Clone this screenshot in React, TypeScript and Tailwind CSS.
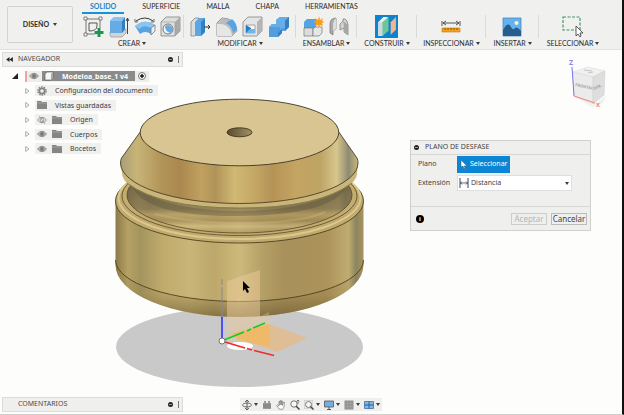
import React from "react";

type IconProps = { children: React.ReactNode; label: string; active?: boolean };

function Tool({ children, label, active }: IconProps) {
  return (
    <button type="button" aria-label={label} className={active ? "size-[23px] bg-[#0b84d0]" : "size-[22px]"}>
      <svg viewBox="0 0 22 22" className="size-full">{children}</svg>
    </button>
  );
}

function Caret() {
  return <span aria-hidden="true" className="border-x-2 border-t-3 border-x-transparent border-t-[#3c3c3c]" />;
}

type GroupProps = { name: string; width: string; last?: boolean; children: React.ReactNode };

function Group({ name, width, last, children }: GroupProps) {
  return (
    <section aria-label={name} className={`flex flex-none flex-col items-center ${width}`}>
      <div className={`flex h-[23px] w-full items-center justify-center gap-1 ${last ? "" : "border-r border-[#dadada]"}`}>{children}</div>
      <button type="button" className="flex h-[11px] items-center gap-[2px] whitespace-nowrap text-[7px] leading-[11px]">
        {name}
        <Caret />
      </button>
    </section>
  );
}

function Toolbar() {
  return (
    <header className="flex h-[50px] flex-none overflow-hidden border-b border-[#e2e2e1] bg-[#f0f0ef] font-['Lato','Noto_Sans',sans-serif] text-[#2c2c2c]">
      <button
        type="button"
        className="mt-[6px] ml-[7px] flex h-[37px] w-[66px] flex-none items-center justify-center gap-1 rounded-xs border border-[#d2d2d2] text-[7px] font-bold"
      >
        DISEÑO <Caret />
      </button>
      <div className="ml-[7px] flex flex-none flex-col">
        <nav className="flex h-[15px] gap-[26px] pl-[2px] text-[7px] leading-[13px]">
          <a href="#solido" className="-mr-2 h-[14px] border-b-2 border-[#1a90d6] px-2 font-bold text-[#1a86c8]">SOLIDO</a>
          <a href="#superficie">SUPERFICIE</a>
          <a href="#malla">MALLA</a>
          <a href="#chapa">CHAPA</a>
          <a href="#herramientas">HERRAMIENTAS</a>
        </nav>
        <div className="flex">
          <Group name="CREAR" width="w-[104px]">
            <Tool label="Crear boceto">
              <path d="M4 3h14v15H4z" fill="none" stroke="#444" strokeWidth=".7" />
              <path d="M7 7h8v3q0 5-8 5z" fill="none" stroke="#444" strokeWidth=".9" />
              <path d="M2 1h3v3H2zM17 1h3v3h-3zM2 17h3v3H2z" fill="#fafafa" stroke="#555" strokeWidth=".7" />
              <path d="M17 12v9M12.500 16.500h9" stroke="#fff" strokeWidth="4" />
              <path d="M17 12v9M12.500 16.500h9" stroke="#239152" strokeWidth="3" />
            </Tool>
            <Tool label="Extruir">
              <path d="M2 19v-3h12l4-3v4l-4 4H3z" fill="#d4d4d4" stroke="#888" strokeWidth=".6" />
              <path d="M2 5l4-4h11l-3 4v12H2z" fill="#65abe6" />
              <path d="M14 5l3-4v12l-3 4z" fill="#317fc2" />
              <path d="M2 5l4-4h11l-3 4z" fill="#87c2f0" />
              <path d="M19.500 18V3M18 5l1.500-3L21 5" stroke="#333" fill="none" strokeWidth=".9" />
            </Tool>
            <Tool label="Revolución">
              <path d="M2 5Q11-1 19 5" stroke="#333" fill="none" />
              <path d="M1 3v3h3M20 3v3h-3" stroke="#333" fill="none" strokeWidth=".7" />
              <path d="M1 10Q11 2 21 9l-4 9Q11 14 6 18z" fill="#58a4e3" />
              <path d="M1 10Q11 2 21 9l-4 3Q10 8 5 13z" fill="#8bc4f0" />
              <path d="M17 12l4-3v6l-4 4z" fill="#eee" stroke="#777" strokeWidth=".8" />
            </Tool>
            <Tool label="Agujero">
              <path d="M1 6l5-5h14v14l-5 5H1z" fill="#dedede" stroke="#777" strokeWidth=".7" />
              <path d="M15 6l5-5v14l-5 5z" fill="#aaa" />
              <path d="M1 6h14v14" fill="none" stroke="#999" strokeWidth=".6" />
              <circle cx="8" cy="13" r="5" fill="#f8f8f8" stroke="#777" />
              <path d="M5 10q0 6 6 7 3-4 0-7-3-2-6 0z" fill="#65abe6" />
            </Tool>
          </Group>
          <Group name="MODIFICAR" width="w-[112px]">
            <Tool label="Pulsar/tirar">
              <path d="M1 6l4-4h4v14l-4 4H1z" fill="#ddd" stroke="#777" strokeWidth=".7" />
              <path d="M5 6l4-4h6v14l-4 4H5z" fill="#5aa7e6" />
              <path d="M11 6l4-4v14l-4 4z" fill="#3380c3" />
              <path d="M14 11h6M18 9l2 2-2 2" fill="none" stroke="#333" />
            </Tool>
            <Tool label="Empalme">
              <path d="M1 20V7l5-5q13 0 15 13l-5 5z" fill="#ddd" stroke="#777" strokeWidth=".8" />
              <path d="M1 8q13-1 15 12l5-5Q18 3 7 2z" fill="#bbb" />
              <path d="M1 8q13-1 15 12H1z" fill="#e6e6e6" />
              <path d="M10 7l6-4q5 4 5 11l-4 3q-1-7-7-10z" fill="#58a4e3" />
            </Tool>
            <Tool label="Vaciado">
              <path d="M1 6l5-5h14v14l-5 5H1z" fill="#e5e5e5" stroke="#777" strokeWidth=".7" />
              <path d="M15 6l5-5v14l-5 5z" fill="#b5b5b5" />
              <path d="M4 9h9v8H4z" fill="#f8f8f8" stroke="#888" strokeWidth=".7" />
              <path d="M4 9l5 3v5H4z" fill="#267dc3" />
              <path d="M4 17l4-4h5v4z" fill="#70b5ec" />
            </Tool>
            <Tool label="Combinar">
              <path d="M1 11l3-3h4V4l4-3h9v10l-4 4h-3v2l-4 4H1z" fill="#529ddd" />
              <path d="M1 11l3-3h4V4l4-3h9l-4 4v7h-3l-2 2v-3z" fill="#69ade6" />
              <path d="M17 5l4-4v10l-4 4zM10 17l4-4v4l-4 4z" fill="#357fbf" />
            </Tool>
          </Group>
          <Group name="ENSAMBLAR" width="w-[61px]">
            <Tool label="Nuevo componente">
              <path d="M2 6l3-3h9v8l-3 2H2z" fill="#55a3e2" />
              <path d="M2 12h9v8H2z" fill="#ddd" stroke="#777" strokeWidth=".7" />
              <path d="M11 13l2-2h7v6l-3 3h-6z" fill="#e6e6e6" stroke="#777" strokeWidth=".7" />
              <path d="M17 0l1 4 3-2-1 3 3 1-3 1 1 3-3-1-1 3-1-3-3 1 1-3-3-1 3-1-1-3 3 2z" fill="#f7a017" />
            </Tool>
            <Tool label="Unión">
              <path d="M2 8q0-6 6-6v11l-3 2v4l-3-2z" fill="#aaa" stroke="#777" strokeWidth=".7" />
              <path d="M5 8q0-3 3-6v11l-3 2z" fill="#ddd" />
              <path d="M12 8l3-3V3q4-1 5 6v10l-4-3v-4l-4 2z" fill="#d2d2d2" stroke="#777" strokeWidth=".7" />
              <path d="M15 5l5 4v10l-4-3v-6z" fill="#a7a7a7" />
            </Tool>
          </Group>
          <Group name="CONSTRUIR" width="w-[60px]">
            <Tool label="Plano de desfase" active>
              <path d="M3 7l5-5h4v13l-5 5H3z" fill="#eee" />
              <path d="M3 7h4v13H3z" fill="#cfd8de" />
              <path d="M7 7l6-5v13l-6 5z" fill="#6cc59d" />
              <path d="M15 7l5-5v12l-5 5z" fill="#f1b58f" />
            </Tool>
          </Group>
          <Group name="INSPECCIONAR" width="w-[69px]">
            <Tool label="Medir">
              <path d="M2 5v5M20 5v5M3 7h16M6 5L3 7l3 2M16 5l3 2-3 2" fill="none" stroke="#444" strokeWidth=".9" />
              <path d="M2 12h18v4H2z" fill="#f3a01f" stroke="#c67b0d" strokeWidth=".6" />
              <path d="M5 12v2M8 12v2M11 12v2M14 12v2M17 12v2" stroke="#704609" strokeWidth=".8" />
            </Tool>
          </Group>
          <Group name="INSERTAR" width="w-[53px]">
            <Tool label="Insertar imagen">
              <path d="M2 2h18v18H2z" fill="#64b3f0" stroke="#438bc4" strokeWidth=".8" />
              <path d="M2 14q5-9 8-3 2 4 4 1 2-2 6 3v5H2z" fill="#285c8c" />
              <circle cx="15.500" cy="7" r="2" fill="#fff5c7" />
            </Tool>
          </Group>
          <Group name="SELECCIONAR" width="w-[68px]" last>
            <Tool label="Seleccionar objetos">
              <path d="M1 1h17v13H1z" fill="none" stroke="#45936c" strokeWidth="1.200" strokeDasharray="3 1.500" />
              <path d="M14 10v10l2-2 2 3 1-1-1-3h3z" fill="#fff" stroke="#333" strokeWidth=".8" />
            </Tool>
          </Group>
        </div>
      </div>
    </header>
  );
}

function Model() {
  return (
    <svg viewBox="0 50 622 364" preserveAspectRatio="xMinYMin meet" className="absolute inset-0 size-full" role="img" aria-label="Modelo 3D">
      <defs>
        <linearGradient id="cone">
          <stop offset="0" stopColor="#a89f77" /><stop offset=".07" stopColor="#c8b477" /><stop offset=".17" stopColor="#b29559" />
          <stop offset=".25" stopColor="#ab874e" /><stop offset=".34" stopColor="#c0a160" /><stop offset=".4" stopColor="#b19359" />
          <stop offset=".48" stopColor="#d0b974" /><stop offset=".56" stopColor="#c5a866" /><stop offset=".64" stopColor="#b59357" />
          <stop offset=".74" stopColor="#c4a562" /><stop offset=".84" stopColor="#bda365" /><stop offset=".91" stopColor="#d7c68c" />
          <stop offset=".96" stopColor="#8d8c72" /><stop offset="1" stopColor="#c9b77f" />
        </linearGradient>
        <linearGradient id="body">
          <stop offset="0" stopColor="#8b7a4a" /><stop offset=".05" stopColor="#b5a164" /><stop offset=".1" stopColor="#a3945f" />
          <stop offset=".19" stopColor="#c0ab6c" /><stop offset=".3" stopColor="#c8b577" /><stop offset=".4" stopColor="#bda76a" />
          <stop offset=".5" stopColor="#cdba7b" /><stop offset=".59" stopColor="#b5a066" /><stop offset=".68" stopColor="#a8915a" />
          <stop offset=".85" stopColor="#ab935a" /><stop offset=".94" stopColor="#c0ac70" /><stop offset=".97" stopColor="#8c845f" /><stop offset="1" stopColor="#a89460" />
        </linearGradient>
        <linearGradient id="foot" x1="0" y1="0" x2="0" y2="1">
          <stop offset="0" stopColor="#5c4d28" stopOpacity="0" /><stop offset=".6" stopColor="#75602f" stopOpacity=".15" /><stop offset="1" stopColor="#5e4e2b" stopOpacity=".6" />
        </linearGradient>
        <linearGradient id="groove" x1="0" y1="0" x2="0" y2="1">
          <stop offset=".4" stopColor="#6b6143" stopOpacity=".75" /><stop offset=".68" stopColor="#7d704d" stopOpacity=".7" />
          <stop offset=".76" stopColor="#b39b62" stopOpacity=".6" /><stop offset=".84" stopColor="#9c8350" stopOpacity=".6" />
          <stop offset=".91" stopColor="#d3bf86" stopOpacity=".6" /><stop offset="1" stopColor="#a08a53" stopOpacity=".5" />
        </linearGradient>
        <linearGradient id="hole"><stop offset="0" stopColor="#574b31" /><stop offset="1" stopColor="#a49162" /></linearGradient>
      </defs>
      <ellipse cx="239.500" cy="347" rx="123.500" ry="40" fill="#c9c9c9" />

      <path d="M115.500 201V265A124 52 0 0 0 363.500 265V201z" fill="url(#body)" />
      <path d="M115.500 260A124 41.500 0 0 0 363.500 260V265A124 52 0 0 1 115.500 265z" fill="url(#foot)" />
      <path d="M115.500 260A124 41.500 0 0 0 363.500 260" fill="none" stroke="#4d4020" strokeWidth=".9" />

      <ellipse cx="239.500" cy="201" rx="124" ry="42" fill="#c0aa6d" stroke="#4d4020" strokeWidth=".9" />
      <ellipse cx="239.500" cy="198" rx="121" ry="41" fill="none" stroke="#dcc88e" strokeWidth="2" />
      <ellipse cx="239.500" cy="196" rx="117.500" ry="39.500" fill="#c2ac70" stroke="#584927" strokeWidth=".8" />
      <ellipse cx="239.500" cy="195" rx="112.500" ry="38" fill="url(#body)" />
      <ellipse cx="239.500" cy="195" rx="112.500" ry="38" fill="url(#groove)" stroke="#584927" strokeWidth=".8" />
      <path d="M155 214Q195 224 250 223T325 212" fill="none" stroke="#cdbb83" strokeWidth="2" opacity=".35" />
      <path d="M133 188Q172 211 239 211T346 188Q330 215 239 216T133 188z" fill="#5a533c" opacity=".4" />

      <path d="M120.500 163L122 173Q122 178 127 183Q160 208 239.500 208T352 183Q357 178 357 173L358 163z" fill="#c9b67b" />
      <path d="M127 183Q160 208 239.500 208T352 183" fill="none" stroke="#8d7a4c" strokeWidth="1" />
      <path d="M140.200 132L121.500 158Q120.500 160 120.500 163A118.750 40.500 0 0 0 358 163Q358 160 357 158L338.800 132z" fill="url(#cone)" stroke="#4d4020" strokeWidth=".9" />
      <ellipse cx="239.500" cy="132.500" rx="99.300" ry="33.300" fill="#d8c592" stroke="#393526" strokeWidth=".9" />
      <ellipse cx="239.500" cy="132.300" rx="12.500" ry="4.500" fill="url(#hole)" stroke="#40371f" strokeWidth=".9" />

      <path d="M227 281l33-11v48l-33 14z" fill="#ecc99c" opacity=".5" />
      <path d="M227 332l42-20v36l-42-9z" fill="#f6c981" opacity=".3" />
      <path d="M229 334l40-10 38 14-30 14z" fill="#efb775" opacity=".6" />
      <path d="M234 333l35-9v23l-32-7z" fill="#f3b64e" opacity=".6" />
      <ellipse cx="240" cy="346" rx="13" ry="4" fill="#fff" />
      <path d="M222 279v6M222 287v31" stroke="#858699" strokeWidth="1" />
      <path d="M222 317v22" stroke="#2727ff" strokeWidth="1.500" />
      <path d="M224 340l20-8M247 331l4-2M253 328l12-5" stroke="#15cb22" strokeWidth="1.600" />
      <path d="M225 342l20 6M247 348.500l5 1.500M254 350.500l20 5" stroke="#f52a20" strokeWidth="1.500" />
      <circle cx="222" cy="341" r="3" fill="#fff" stroke="#777" />
      <path d="M243 281v10l2-2 2 4 2-1-2-4h3z" fill="#000" />
    </svg>
  );
}

function PanelBar({ title, arrows }: { title: string; arrows?: boolean }) {
  return (
    <div className="flex h-[15px] w-[181px] flex-none items-center border border-[#dcdcdb] bg-[#efefee] px-[3px] text-[7px] text-[#4c4c4c]">
      <span className="flex w-3">
        {arrows && <svg viewBox="0 0 8 6" className="h-[5px] w-[7px]"><path d="M0 3l4-3v6zM4 3l4-3v6z" fill="#222" /></svg>}
      </span>
      <h2 className="flex-1">{title}</h2>
      <button type="button" aria-label={`Contraer ${title}`} className="flex size-[5px] items-center justify-center rounded-full bg-[#222]">
        <span className="h-px w-[3px] bg-[#999]" />
      </button>
      <span className="ml-[5px] h-[7px] w-px bg-[#777]" />
    </div>
  );
}

function Eye({ off }: { off?: boolean }) {
  return (
    <svg viewBox="0 0 10 8" className="h-[8px] w-[10px] flex-none">
      <path d="M0.500 4Q5-1.500 9.500 4 5 9.500.5 4z" fill={off ? "none" : "#bbb"} stroke="#888" strokeWidth=".9" />
      <circle cx="5" cy="4" r="1.900" fill={off ? "none" : "#777"} stroke="#888" strokeWidth=".8" />
      {off && <path d="M2 0l6 8" stroke="#999" strokeWidth=".8" />}
    </svg>
  );
}

function Folder() {
  return (
    <svg viewBox="0 0 10 8" className="h-[8px] w-[10px] flex-none">
      <path d="M0 0h4l1 1h5v7H0z" fill="#858585" /><path d="M0 2h10" stroke="#b5b5b5" strokeWidth=".6" />
    </svg>
  );
}

function Gear() {
  return (
    <svg viewBox="0 0 10 10" className="size-[10px] flex-none">
      <circle cx="5" cy="5" r="4" fill="none" stroke="#858585" strokeWidth="1.600" strokeDasharray="1.500 1" />
      <circle cx="5" cy="5" r="2.600" fill="none" stroke="#858585" strokeWidth="1.600" />
    </svg>
  );
}

function Expand() {
  return (
    <button type="button" aria-label="Expandir" className="w-[10px] flex-none">
      <svg viewBox="0 0 5 6" className="h-[6px] w-[5px]"><path d="M.7.500L4 3 .7 5.500z" fill="#fff" stroke="#888" strokeWidth=".7" /></svg>
    </button>
  );
}

const rows = [
  { name: "Configuración del documento", gear: true },
  { name: "Vistas guardadas" },
  { name: "Origen", eye: "off" },
  { name: "Cuerpos", eye: "on" },
  { name: "Bocetos", eye: "on" },
];

function Browser() {
  return (
    <aside aria-label="Navegador" className="relative pt-[2px] pl-[2px]">
      <PanelBar title="NAVEGADOR" arrows />
      <ul className="mt-[2px] grid h-[87px] w-[181px] grid-rows-6 text-[7px] leading-[11px]">
        <li className="flex items-center pl-[10px]">
          <svg viewBox="0 0 6 6" className="mr-[7px] size-[6px]"><path d="M6 0v6H0z" fill="#222" /></svg>
          <span className="h-[11px] w-[2px] bg-[#f1a3a0]" />
          <span className="flex h-[11px] items-center bg-[#ededec] pr-[3px] pl-[2px]">
            <Eye />
            <span className="ml-[3px] flex h-[10px] items-center bg-[#8b8b8b] pr-[7px] pl-[2px] font-bold text-white">
              <svg viewBox="0 0 10 10" className="mr-[8px] size-[10px]"><path d="M1 3l2-2h6v6L7 9H1z" fill="#f5f5f5" stroke="#555" strokeWidth=".6" /><path d="M7 3l2-2v6L7 9z" fill="#aaa" /></svg>
              Modeloa_base_1 v4
            </span>
            <input type="radio" aria-label="Activar componente" defaultChecked className="ml-[3px] size-[8px] appearance-none rounded-full border border-[#777] bg-[radial-gradient(#222_35%,#fff_45%)]" />
          </span>
        </li>
        {rows.map((row) => (
          <li key={row.name} className="flex items-center pl-[23px]">
            <Expand />
            <span className="flex h-[11px] items-center gap-[5px] bg-[#f0f0ef] pr-[5px] pl-[2px]">
              {row.eye && <Eye off={row.eye === "off"} />}
              {row.gear ? <Gear /> : <Folder />}
              <span className="pl-[3px] whitespace-nowrap">{row.name}</span>
            </span>
          </li>
        ))}
      </ul>
    </aside>
  );
}

function ViewCube() {
  return (
    <svg viewBox="0 0 46 56" className="absolute top-[6px] right-[10px] h-[56px] w-[46px]" role="img" aria-label="Cubo de vista">
      <path d="M7 40l20 9 13-9-3 7-11 4z" fill="#ddd" opacity=".4" />
      <path d="M7 16l15-5 17 4-12 6z" fill="#f0f0f0" stroke="#ddd" strokeWidth=".6" />
      <path d="M7 16l20 5v27L8 40z" fill="#ebebeb" stroke="#d8d8d8" strokeWidth=".6" />
      <path d="M27 21l12-6-1 24-11 9z" fill="#dedede" stroke="#d0d0d0" strokeWidth=".6" />
      <text x="9" y="30" fontSize="4" fontWeight="700" fill="#a3a3a3" transform="rotate(12 9 30)">FRONTAL</text>
      <text x="28" y="34" fontSize="4" fontWeight="700" fill="#a3a3a3" transform="rotate(-24 28 34)">DER.</text>
      <path d="M18 14l8 1M22 17l5-1" stroke="#c4c4c4" />
      <path d="M6 11l2 29" stroke="#7777e8" strokeWidth="1" />
      <path d="M8 40l21 7" stroke="#ee8c80" strokeWidth="1.200" />
      <text x="3" y="9" fontSize="7" fontWeight="700" fill="#8989ef">Z</text>
      <text x="30" y="51" fontSize="6" fontWeight="700" fill="#f0857e">X</text>
    </svg>
  );
}

function OffsetDialog() {
  return (
    <form aria-label="Plano de desfase" onSubmit={(e) => e.preventDefault()} className="absolute top-[90px] right-[31px] w-[181px] border border-[#d0d0cf] bg-[#efefee] text-[7px] text-[#444]">
      <div className="flex h-[14px] items-center border-b border-[#d6d6d5] pl-[3px]">
        <span className="mr-[6px] flex size-[5px] items-center justify-center rounded-full bg-[#222]"><span className="h-px w-[3px] bg-[#999]" /></span>
        <h2>PLANO DE DESFASE</h2>
      </div>
      <div className="grid grid-cols-[39px_115px] gap-y-[2px] pt-px pl-[7px]">
        <label htmlFor="plane" className="self-center">Plano</label>
        <button id="plane" type="button" className="flex h-[17px] w-[53px] items-center gap-[3px] bg-[#0c86d4] pl-[3px] text-white">
          <svg viewBox="0 0 7 9" className="h-[9px] w-[7px]"><path d="M1 0v7l2-1 1 3 1-1-1-2h3z" fill="#fff" stroke="#34536c" strokeWidth=".5" /></svg>
          Seleccionar
        </button>
        <label htmlFor="extent" className="self-center">Extensión</label>
        <span className="grid items-center">
          <select id="extent" className="col-start-1 row-start-1 h-[16px] appearance-none border border-[#dededd] bg-white pl-[13px]"><option>Distancia</option></select>
          <svg viewBox="0 0 10 10" className="pointer-events-none col-start-1 row-start-1 ml-[2px] size-[10px]"><path d="M1 0v10M9 0v10" stroke="#34406d" /><path d="M1 5h8M3 3.500L1.500 5 3 6.500M7 3.500L8.500 5 7 6.500" stroke="#333" strokeWidth=".7" fill="none" /></svg>
          <span className="pointer-events-none col-start-1 row-start-1 mr-[3px] flex justify-self-end"><Caret /></span>
        </span>
      </div>
      <div className="mt-[15px] flex h-[24px] items-center gap-1 border-t border-[#d6d6d5] pr-[3px] pl-[5px]">
        <span className="flex size-[8px] items-center justify-center rounded-full bg-black text-[6px] leading-[8px] font-bold text-white">i</span>
        <button type="button" disabled className="ml-auto h-[12px] w-[36px] border border-[#ccc] text-[8px] leading-[10px] text-[#b5b5b5]">Aceptar</button>
        <button type="submit" className="h-[12px] w-[36px] border border-[#bbb] text-[8px] leading-[10px]">Cancelar</button>
      </div>
    </form>
  );
}

function NavButton({ label, caret, children }: { label: string; caret?: boolean; children: React.ReactNode }) {
  return (
    <button type="button" aria-label={label} className="flex items-center gap-[2px]">
      <svg viewBox="0 0 10 10" className="size-[10px]">{children}</svg>
      {caret && <Caret />}
    </button>
  );
}

function ViewControls() {
  return (
    <div role="toolbar" aria-label="Navegación" className="flex h-[13px] w-[142px] items-center justify-between bg-[#efefee] px-[2px]">
      <NavButton label="Órbita" caret>
        <ellipse cx="5" cy="5" rx="4.500" ry="2" fill="none" stroke="#666" strokeWidth=".9" /><path d="M5 0v10M3 2l2-2 2 2M3 8l2 2 2-2" fill="none" stroke="#555" strokeWidth=".9" />
      </NavButton>
      <NavButton label="Mirar a"><path d="M1 3h8v6H1zM2 1h2v2H2zM6 1h2v2H6z" fill="#9a9a9a" /><path d="M1 5h8M1 7h8" stroke="#666" strokeWidth=".6" /></NavButton>
      <NavButton label="Encuadre"><path d="M3 9L.7 5.500l1-.5L3 6V1.500h1V5 .7h1.200V5 1h1.200v4.500L7.500 2l1 .3L8 7 6.500 9.500z" fill="#fff" stroke="#777" strokeWidth=".7" /></NavButton>
      <NavButton label="Zoom"><circle cx="4" cy="4" r="3.200" fill="#f7f7f7" stroke="#777" /><path d="M6 6l3.500 3.500" stroke="#444" strokeWidth="1.500" /><path d="M8 0v4M6.500 1.500L8 0l1.500 1.500" stroke="#555" strokeWidth=".7" fill="none" /></NavButton>
      <NavButton label="Ajustar" caret><path d="M.5.500h8v8h-8z" fill="none" stroke="#999" strokeWidth=".6" strokeDasharray="1 1" /><circle cx="4.500" cy="4.500" r="3" fill="#f7f7f7" stroke="#777" /><path d="M6.500 6.500l3 3" stroke="#444" strokeWidth="1.500" /></NavButton>
      <NavButton label="Visualización" caret><path d="M.5 1h9v6h-9z" fill="#75aee0" stroke="#555" strokeWidth=".8" /><path d="M3 9.500h4M5 7v2" stroke="#555" /></NavButton>
      <NavButton label="Rejilla" caret><path d="M.5.500h9v9h-9z" fill="#929292" /><path d="M.5 3.500h9M.5 6.500h9M3.500.500v9M6.500.500v9" stroke="#aaa" strokeWidth=".5" /></NavButton>
      <NavButton label="Ventanas" caret><path d="M.5 1.500h9v7h-9z" fill="#82b6e5" stroke="#426f9c" strokeWidth=".8" /><path d="M5 1.500v7M.5 5h9" stroke="#345f8c" /></NavButton>
    </div>
  );
}

export default function App() {
  return (
    <div className="flex min-h-screen flex-col overflow-hidden border-r-2 border-b border-r-[#111] border-b-[#cfcfcf] bg-[#fdfdfb] font-['Noto_Sans','Open_Sans',sans-serif] text-[#3c3c3c]">
      <Toolbar />
      <main className="relative flex flex-1 flex-col justify-between">
        <Model />
        <Browser />
        <ViewCube />
        <OffsetDialog />
        <footer className="relative flex items-center gap-[57px] pb-[2px] pl-[2px]">
          <PanelBar title="COMENTARIOS" />
          <ViewControls />
        </footer>
      </main>
    </div>
  );
}
